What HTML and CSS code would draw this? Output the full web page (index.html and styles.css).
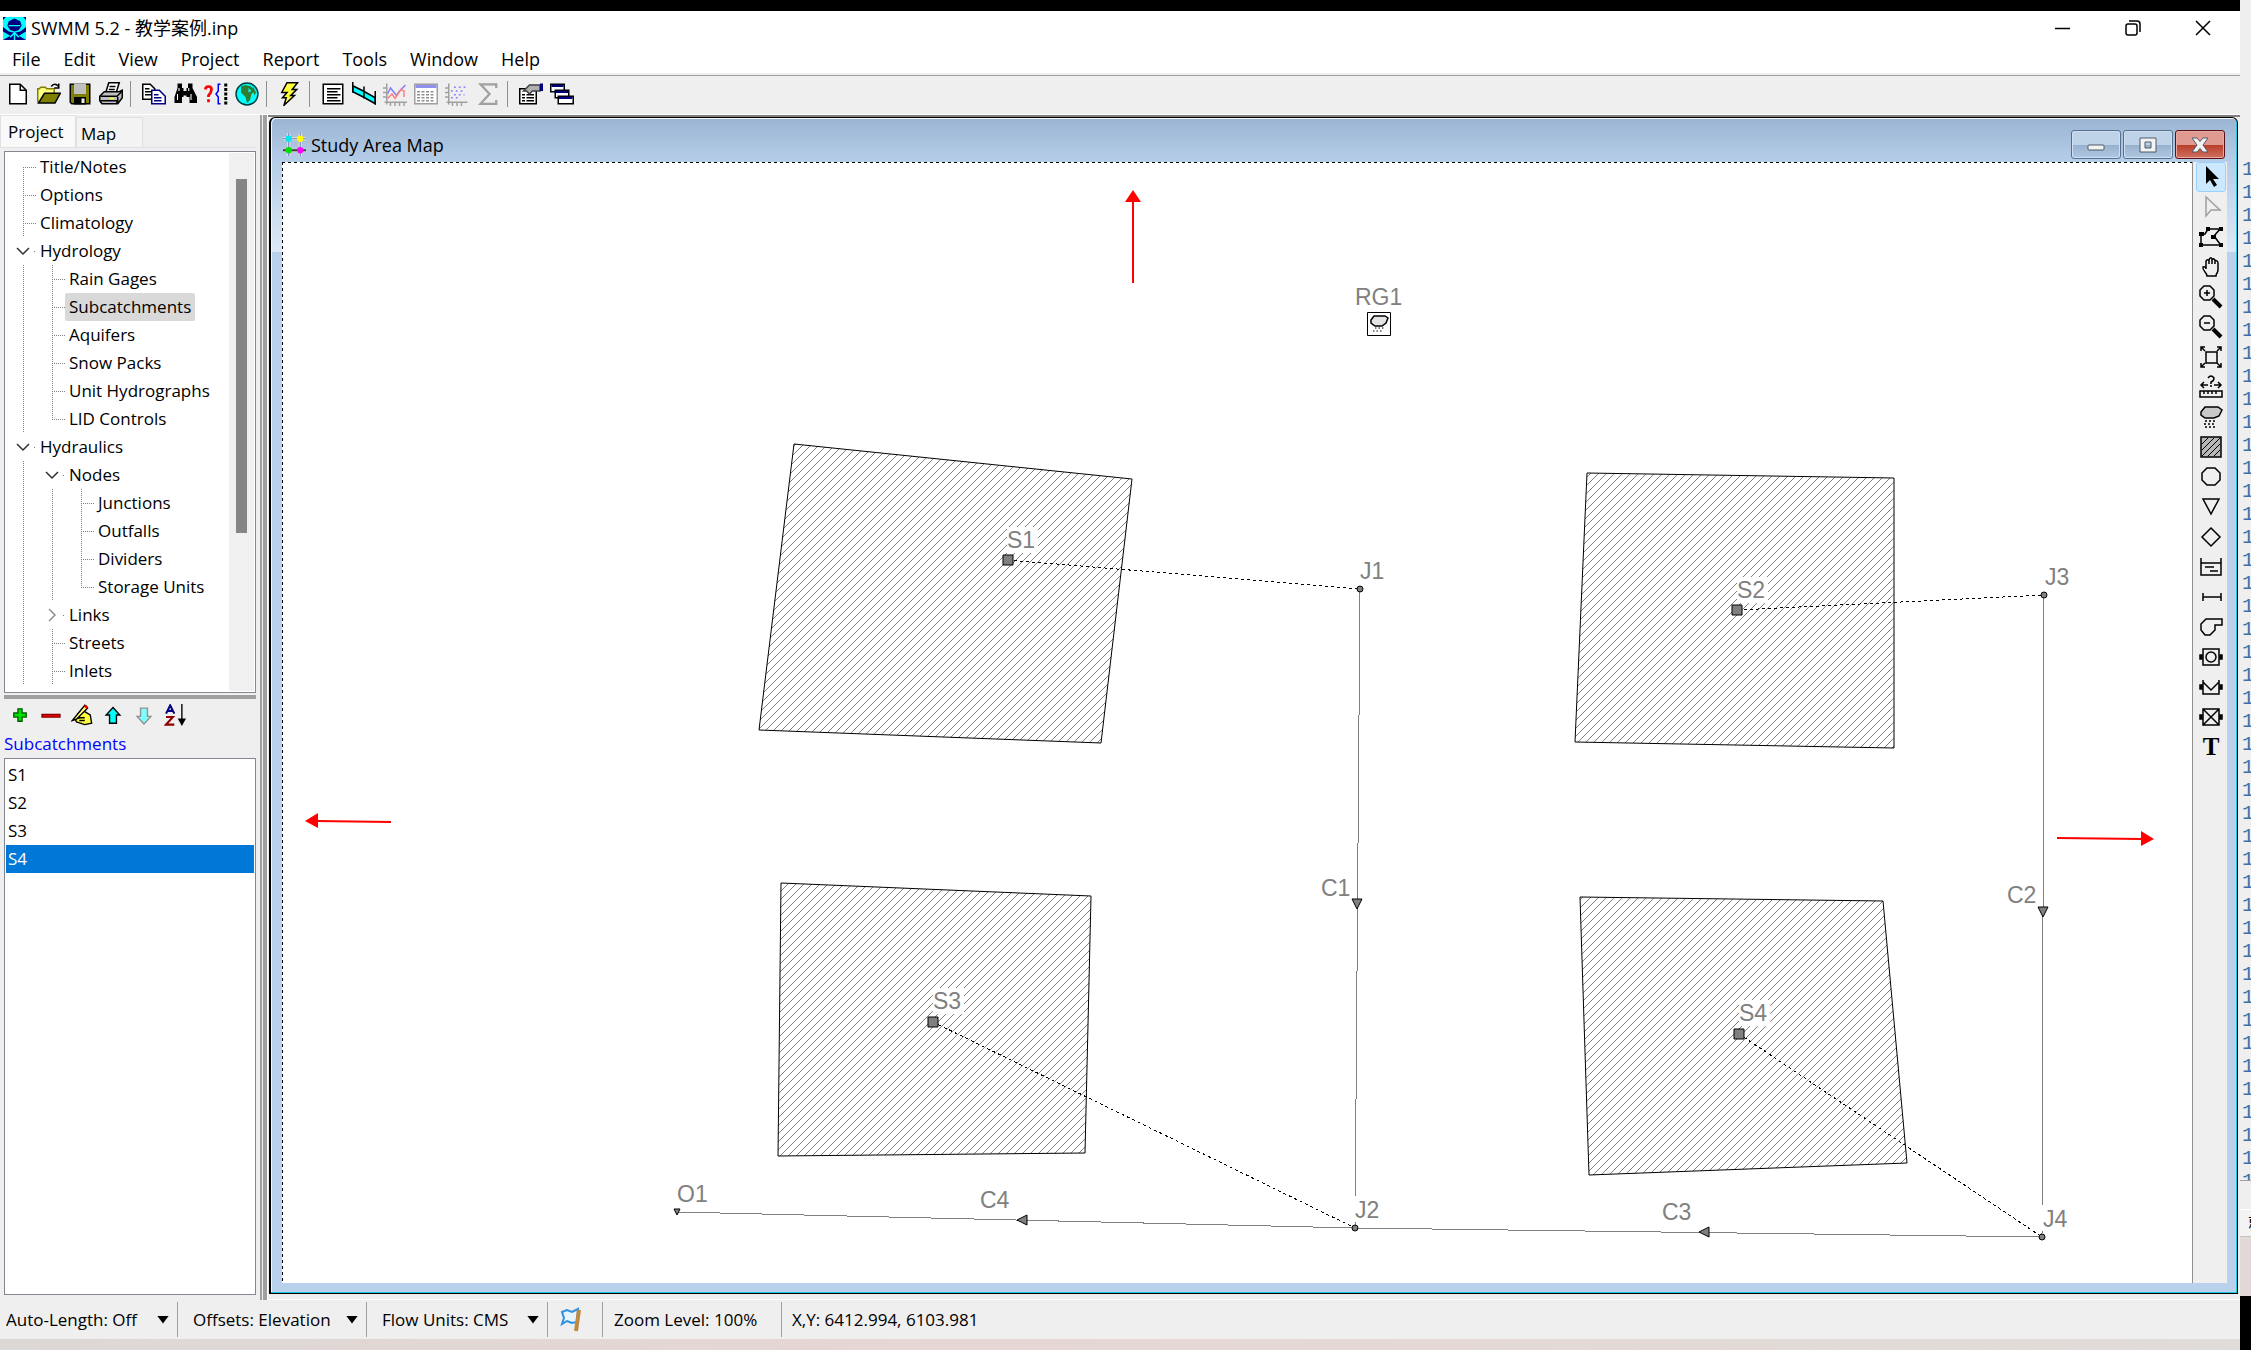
FILE: index.html
```html
<!DOCTYPE html>
<html lang="en">
<head>
<meta charset="utf-8">
<title>SWMM 5.2 - 教学案例.inp</title>
<link rel="stylesheet" href="styles.css">
</head>
<body>
<div class="app">
  <div class="screen-edge"></div>
  <header class="titlebar">
    <svg class="logo" viewBox="0 0 16 16"><path fill="#00ffff" d="M0 0h16v16H0z"/><path fill="#000080" d="M8 1l4 2 1 3-2 3-3 1-3-1-2-3 1-3zM0 7l4 3 4 1 4-1 4-3v3l-5 3 5 3H0l5-3-5-3zM0 0h2L0 2zM14 0h2v2z"/><path stroke="#00ffff" fill="none" d="M4 6h8M8 11v5M5 14l3-3 3 3"/></svg>
    <h1>SWMM 5.2 - 教学案例.inp</h1>
    <div class="win-buttons">
      <button aria-label="Minimize"><svg viewBox="0 0 16 16"><path d="M0 8.500h15"/></svg></button>
      <button aria-label="Restore"><svg viewBox="0 0 16 16"><rect x="1" y="4" width="11" height="11" rx="2"/><path d="M4 1h8q3 0 3 3v8"/></svg></button>
      <button aria-label="Close"><svg viewBox="0 0 16 16"><path d="M1 1l14 14M15 1L1 15"/></svg></button>
    </div>
  </header>
  <nav class="menubar">
    <button>File</button><button>Edit</button><button>View</button><button>Project</button><button>Report</button><button>Tools</button><button>Window</button><button>Help</button>
  </nav>
  <div class="toolbar">
    <button aria-label="New"><svg viewBox="0 0 16 16"><path d="M2.500 1.500h7l4 4v9h-11z" fill="#fff" stroke="#000"/><path d="M9.500 1.500v4h4" fill="none" stroke="#000"/></svg></button>
    <button aria-label="Open"><svg viewBox="0 0 16 16"><path d="M.5 13.500v-9h1l1-1h3l1 1h5v3" fill="#ffff80" stroke="#808000"/><path d="M1 14l4-6.500h10.500L12 14z" fill="#808000" stroke="#000"/><path d="M9.500 3q2-3 5 0M14.500 1v3h-3" fill="none" stroke="#000"/></svg></button>
    <button aria-label="Save"><svg viewBox="0 0 16 16"><path d="M1.500 1.500h13v13h-12l-1-1z" fill="#808000" stroke="#000"/><path d="M4 1h8v7H4z" fill="#c0c0c0"/><path d="M4 10h8v5H4z"/><path fill="#efefef" d="M9 11h2v3H9z"/></svg></button>
    <button aria-label="Print"><svg viewBox="0 0 16 16"><path d="M4.500 7l2-6.500h7L11.500 7" fill="#fff" stroke="#000"/><path d="M7 3h4M6.500 5h4" stroke="#000"/><path d="M.5 9.500l3-3h10l2-1v5l-3 4H2l-1.500-2z" fill="#c0c0c0" stroke="#000"/><path d="M1 9.500h11l3-3M1 12.500h11v2M12.500 10v4" stroke="#000" fill="none"/><path d="M7 11h3" stroke="#ff0"/></svg></button>
    <span class="sep"></span>
    <button aria-label="Copy"><svg viewBox="0 0 16 16"><path d="M.5 1.500h5l3 3v7h-8z" fill="#fff" stroke="#000"/><path d="M2 4.500h3M2 6.500h4M2 8.500h4" stroke="#000"/><path d="M6.500 5.500h5l4 4v5h-9z" fill="#fff" stroke="#000080"/><path d="M8 8.500h3M8 10.500h5M8 12.500h5" stroke="#000080"/></svg></button>
    <button aria-label="Find"><svg viewBox="0 0 16 16"><path d="M3 1h3v3h1v2h2V4h1V1h3v3l3 6v4h-5v-4H9V9H7v1H6v4H1v-4l2-6z"/><path d="M4 4v2M3 8v4M10.500 4v2M12 8v4" stroke="#fff" stroke-width=".7"/></svg></button>
    <button aria-label="Query"><svg viewBox="0 0 16 16"><path d="M1 5q0-2 2-2t2 2-2 4v1M3 11.500v2" fill="none" stroke="#f00" stroke-width="1.800"/><path d="M11 1.500H9.500V6L8 8l1.500 2v4.500H11" fill="none" stroke="#00f"/><path d="M14.500 1v14" stroke="#000" stroke-width="2" stroke-dasharray="2 1"/></svg></button>
    <button aria-label="Overview"><svg viewBox="0 0 16 16"><circle cx="8" cy="8" r="7.300" fill="#00ffff" stroke="#004040"/><path d="M4 3l3-1 4 1 2 3-2 2-1 4-2 2-1-4-3-3z" fill="#2e7d32"/><path d="M12 3l2 4-1 2-1-3z" fill="#2e7d32"/><path d="M9 4l2 2-2 1z" fill="#00ffff"/></svg></button>
    <span class="sep"></span>
    <button aria-label="Run"><svg viewBox="0 0 16 16"><path d="M6 .5h7L9.500 5h3L8.500 9h2.500L4 15.500 5.500 10.500H3L6 7H2.500z" fill="#ffff40" stroke="#000"/></svg></button>
    <span class="sep"></span>
    <button aria-label="Report"><svg viewBox="0 0 16 16"><path d="M1.500 1.500h13v13h-13z" fill="#fff" stroke="#000"/><path d="M4 4.500h9M4 6.500h7M4 8.500h9M4 10.500h7M4 12.500h9" stroke="#000"/></svg></button>
    <button aria-label="Profile plot"><svg viewBox="0 0 16 16"><path d="M.5 2.500l7 3.500 8 4.500v4L7.500 10l-7-3.500z" fill="#00ffff" stroke="#000"/><path d="M.5 0v7M8 3v8M15.500 6v9" stroke="#000"/></svg></button>
    <button aria-label="Time series plot"><svg viewBox="0 0 16 16"><path d="M2.500 1v14M1 13.500h15M0 4h3M0 7h3M0 10h3M5 13v3M8 13v3M11 13v3M14 13v3" stroke="#a0a0a0"/><path d="M3 8l2-4 4 5 2-3 4-4" fill="none" stroke="#8080ff"/><path d="M3 11l3-3 2 3 4-6 2 1v4" fill="none" stroke="#ff8080"/></svg></button>
    <button aria-label="Table"><svg viewBox="0 0 16 16"><path d="M.5 1.500h15v13H.5z" fill="#fff" stroke="#a0a0a0"/><path d="M1 3h14" stroke="#9090f0" stroke-width="2"/><path d="M2 6.500h12M2 8.500h12M2 10.500h12M2 12.500h12" stroke="#909090" stroke-dasharray="2 1"/></svg></button>
    <button aria-label="Scatter plot"><svg viewBox="0 0 16 16"><path d="M2.500 1v14M1 13.500h14M0 4h3M0 7h3M0 10h3M5 13v3M8 13v3M11 13v3" stroke="#a0a0a0"/><path d="M6 3.500h8M4 6h9M6 8.500h7M4 10.500h6" stroke="#8080ff" stroke-dasharray="1.200 2"/></svg></button>
    <button aria-label="Statistics"><svg viewBox="0 0 16 16"><path d="M13.500 4V1.500H3L9 8l-6 6.500h10.500V12" fill="none" stroke="#a0a0a0" stroke-width="1.500"/></svg></button>
    <span class="sep"></span>
    <button aria-label="Options"><svg viewBox="0 0 16 16"><path d="M.5 4.500h11v10H.5z" fill="#fff" stroke="#000"/><path d="M2 8.500h2M5 8.500h5M2 10.500h2M5 10.500h5M2 12.500h2M5 12.500h5" stroke="#000"/><path d="M3 6l4-4h7v4H9L7 8 5 6z" fill="#b0b0b0" stroke="#404040"/><path d="M14 1h2v5h-2z" fill="#000080"/></svg></button>
    <button aria-label="Arrange windows"><svg viewBox="0 0 16 16"><g fill="#fff" stroke="#000"><path d="M.5 1.500h9v5h-9zM3.500 5.500h9v5h-9zM5.500 9.500h10v5h-10z"/></g><path d="M1 2.500h8M4 6.500h8M6 10.500h9" stroke="#000080" stroke-width="1.500"/></svg></button>
  </div>

  <main class="work">
    <aside class="side">
      <div class="tabs" role="tablist"><button class="tab active" role="tab">Project</button><button class="tab" role="tab">Map</button></div>
      <div class="tree">
        <ul>
          <li><i class="first tee"></i><button>Title/Notes</button></li>
          <li><i class="line tee"></i><button>Options</button></li>
          <li><i class="line tee"></i><button>Climatology</button></li>
          <li><i class="node"><svg viewBox="0 0 14 14"><path d="M1 4l6 6 6-6"/></svg></i><button>Hydrology</button></li>
          <li><i class="line"></i><i class="line tee"></i><button>Rain Gages</button></li>
          <li><i class="line"></i><i class="line tee"></i><button class="selected">Subcatchments</button></li>
          <li><i class="line"></i><i class="line tee"></i><button>Aquifers</button></li>
          <li><i class="line"></i><i class="line tee"></i><button>Snow Packs</button></li>
          <li><i class="line"></i><i class="line tee"></i><button>Unit Hydrographs</button></li>
          <li><i class="line"></i><i class="last tee"></i><button>LID Controls</button></li>
          <li><i class="node"><svg viewBox="0 0 14 14"><path d="M1 4l6 6 6-6"/></svg></i><button>Hydraulics</button></li>
          <li><i class="line"></i><i class="node"><svg viewBox="0 0 14 14"><path d="M1 4l6 6 6-6"/></svg></i><button>Nodes</button></li>
          <li><i class="line"></i><i class="line"></i><i class="line tee"></i><button>Junctions</button></li>
          <li><i class="line"></i><i class="line"></i><i class="line tee"></i><button>Outfalls</button></li>
          <li><i class="line"></i><i class="line"></i><i class="line tee"></i><button>Dividers</button></li>
          <li><i class="line"></i><i class="line"></i><i class="last tee"></i><button>Storage Units</button></li>
          <li><i class="line"></i><i class="node closed"><svg viewBox="0 0 14 14"><path d="M4 1l6 6-6 6"/></svg></i><button>Links</button></li>
          <li><i class="line"></i><i class="line tee"></i><button>Streets</button></li>
          <li><i class="line"></i><i class="line tee"></i><button>Inlets</button></li>
        </ul>
        <div class="scroll"><div class="thumb"></div></div>
      </div>
      <div class="hsplit"></div>
      <div class="list-tools">
        <button aria-label="Add"><svg viewBox="0 0 16 16"><path d="M6.500 3.500h3v3h3v3h-3v3h-3v-3h-3v-3h3z" fill="#00e000" stroke="#006000"/></svg></button>
        <button aria-label="Delete"><svg viewBox="0 0 16 16"><path d="M1.500 7.500h13v2h-13z" fill="#f00000" stroke="#800000"/></svg></button>
        <button aria-label="Edit"><svg viewBox="0 0 16 16"><path d="M5 7l4-2 5 3 1 6-5 1-6-2-1-2 3-1z" fill="#ffff40" stroke="#000"/><path d="M1 12L10 1l2 2-8 8z" fill="#ffff80" stroke="#000"/><path d="M10 1l2 2" stroke="#e00000" stroke-width="2"/><path d="M5 10h5M6 12h4" stroke="#000"/></svg></button>
        <button aria-label="Move up"><svg viewBox="0 0 16 16"><path d="M8 2.500l5 5.500h-2.500v6h-5V8H3z" fill="#00ffff" stroke="#000"/></svg></button>
        <button aria-label="Move down"><svg viewBox="0 0 16 16"><path d="M8 14.500L3 9h2.500V3h5v6H13z" fill="#80ffff" stroke="#909090"/></svg></button>
        <button aria-label="Sort"><svg viewBox="0 0 16 16"><path d="M1.500 7L4.500 1l3 6M2.500 5h4" fill="none" stroke="#000080" stroke-width="1.500"/><path d="M1.500 9.500h5l-5 5.500h6" fill="none" stroke="#900000" stroke-width="1.500"/><path d="M13 0v13" stroke="#000"/><path d="M10 10.500h6L13 16z"/></svg></button>
      </div>
      <h2>Subcatchments</h2>
      <ul class="objects">
        <li><button>S1</button></li><li><button>S2</button></li><li><button>S3</button></li><li><button class="selected">S4</button></li>
      </ul>
    </aside>
    <div class="vsplit"></div>

    <section class="mdi">
      <div class="window">
        <header class="window-title">
          <svg class="map-icon" viewBox="0 0 22 22"><path d="M0 5.500h22M0 16.500h22M5.500 0v22M16.500 0v22" stroke="#f0e8c8" stroke-width="3"/><path d="M0 5.500h22M5.500 0v22M16.500 0v22" stroke="#7070d0"/><path d="M0 16.500h22" stroke="#404040" stroke-width="2"/><circle cx="5.500" cy="5.500" r="3" fill="#00e8f0"/><circle cx="16.500" cy="5.500" r="3" fill="#ff0"/><circle cx="5.500" cy="16.500" r="3" fill="#00e000"/><circle cx="16.500" cy="16.500" r="3" fill="#f0f"/></svg>
          <h2>Study Area Map</h2>
          <button aria-label="Minimize map"><svg viewBox="0 0 20 16"><rect x="2" y="8" width="16" height="5" rx="1"/></svg></button>
          <button aria-label="Maximize map"><svg viewBox="0 0 20 16"><path fill-rule="evenodd" d="M2 1h16v14H2zM7 5v6h6V5z"/></svg></button>
          <button class="close" aria-label="Close map"><svg viewBox="0 0 20 16"><path d="M2 1h5l3 3.500L13 1h5l-5 7 5 7h-5l-3-3.500L7 15H2l5-7z"/></svg></button>
        </header>
        <div class="window-body">
          <div class="map">
            <svg class="canvas" role="img" aria-label="Study area">
              <defs>
                <pattern id="hatch" width="8" height="8" patternUnits="userSpaceOnUse"><path d="M-1 9L9-1" stroke="#808080" shape-rendering="crispEdges"/></pattern>
              </defs>
              <g transform="translate(-282 -162)">
                <g class="basin">
                  <path d="M794 444L1132 479 1101 743 759 730z"/>
                  <path d="M1587 473L1894 478V748L1575 742z"/>
                  <path d="M781 883L1091 896 1085 1153 778 1156z"/>
                  <path d="M1580 897L1883 901 1907 1163 1589 1175z"/>
                </g>
                <g class="conduit">
                  <path d="M1360 589L1355 1228M2044 595L2042 1237M2042 1237L1355 1228M1355 1228L677 1212"/>
                </g>
                <g class="label-bg">
                  <path d="M1007 527h31v26h-31zM1737 577h31v26h-31zM933 988h31v26h-31zM1739 1000h31v26h-31zM1353 1196h28v26h-28zM2040 1205h28v26h-28z"/>
                </g>
                <g class="outlet">
                  <path d="M1008 560L1360 589M1738 610L2044 595M933 1022L1355 1228M1739 1034L2042 1237"/>
                </g>
                <g class="marker">
                  <path d="M1003 555h10v10h-10zM1732 605h10v10h-10zM928 1017h10v10h-10zM1734 1029h10v10h-10z"/>
                  <circle cx="1360" cy="589" r="3"/><circle cx="2044" cy="595" r="3"/><circle cx="1355" cy="1228" r="3"/><circle cx="2042" cy="1237" r="3"/>
                  <path d="M674 1209h6l-3 6zM1352 899h10l-5 10zM2038 907h10l-5 10zM1017 1220l10-5v10zM1699 1232l10-5v10z"/>
                </g>
                <g class="gage">
                  <path d="M1367.500 312.500h23v23h-23z" fill="#fff" stroke="#000"/>
                  <path d="M1371 320l3-4h11l3 2-2 5-4 3h-7l-4-3z" fill="#e4e4e4" stroke="#000" stroke-width="1.500"/>
                  <path d="M1375 328h10M1373 331h9" stroke="#000" stroke-dasharray="1.500 2"/>
                </g>
                <g class="extent">
                  <path d="M1133 283V200M391 822L317 821M2057 838L2142 839"/>
                  <path class="tip" d="M1125 202h16l-8-12zM318 813v15l-13-7zM2141 831v15l13-7z"/>
                </g>
                <g class="labels">
                  <text x="1355" y="305">RG1</text><text x="1007" y="548">S1</text><text x="1737" y="598">S2</text><text x="933" y="1009">S3</text><text x="1739" y="1021">S4</text>
                  <text x="1360" y="579">J1</text><text x="1355" y="1218">J2</text><text x="2045" y="585">J3</text><text x="2043" y="1227">J4</text>
                  <text x="1321" y="896">C1</text><text x="2007" y="903">C2</text><text x="1662" y="1220">C3</text><text x="980" y="1208">C4</text><text x="677" y="1202">O1</text>
                </g>
              </g>
            </svg>
          </div>
          <div class="map-tools">
            <button class="on" aria-label="Select object"><svg viewBox="0 0 24 24"><path d="M7 1v18l4-4 4 7 3-2-4-6h6z" fill="#000" stroke="none"/></svg></button>
            <button aria-label="Select vertex"><svg viewBox="0 0 24 24"><path d="M7 2v19l5-6h9z" stroke="#a0a0a0"/></svg></button>
            <button aria-label="Select region"><svg viewBox="0 0 24 24"><path d="M2 9h4l3-5h12M2 9v11h19M21 4l-6 7 6 8" /><path fill="#000" stroke="none" d="M0 7h5v4H0zM7 2h4v4H7zM20 2h4v4h-4zM12 10h5v4h-5zM0 18h4v4H0zM20 18h4v4h-4z"/></svg></button>
            <button aria-label="Pan"><svg viewBox="0 0 24 24"><path d="M8 21c0-4-5-5-4-9 2-1 3 1 3 2V6c1-2 3-1 3 0 0-4 3-4 3-1 1-2 3-1 3 1 1-1 3 0 3 2v7c0 3-2 3-2 6zM10 6v3M13 5v4M16 6v3"/></svg></button>
            <button aria-label="Zoom in"><svg viewBox="0 0 24 24"><path d="M5 1h6l4 4v6l-4 4H5l-4-4V5zM8 5v6M5 8h6"/><path d="M14 14l8 8" stroke-width="4"/></svg></button>
            <button aria-label="Zoom out"><svg viewBox="0 0 24 24"><path d="M5 1h6l4 4v6l-4 4H5l-4-4V5zM5 8h6"/><path d="M14 14l8 8" stroke-width="4"/></svg></button>
            <button aria-label="Full extent"><svg viewBox="0 0 24 24"><path d="M7 7h11v11H7zM2 6V2h4M2 2l4 4M18 2h4v4M22 2l-4 4M2 18v4h4M2 22l4-4M22 18v4h-4M22 22l-4-4"/></svg></button>
            <button aria-label="Measure"><svg viewBox="0 0 24 24"><path d="M9 3q3-4 6 0 0 3-3 4v2M12 10v2M2 10h7M15 10h7M5 7l-3 3 3 3M19 7l3 3-3 3M1 16h22v6H1zM5 16v3M9 16v3M13 16v3M17 16v3"/></svg></button>
            <button aria-label="Rain gage"><svg viewBox="0 0 24 24"><path d="M2 7l4-5h13l4 3-3 6-5 2H6L2 10z" fill="#c8c8c8"/><path d="M6 16h11M5 19h11M6 22h10" stroke-dasharray="2 2"/></svg></button>
            <button aria-label="Subcatchment"><svg viewBox="0 0 24 24"><path d="M2 2h20v20H2z" fill="#b8b8b8"/><path stroke-width="1" d="M3 9l6-6M3 15L15 3M3 21L21 3M9 21L21 9M15 21l6-6"/></svg></button>
            <button aria-label="Junction"><svg viewBox="0 0 24 24"><path d="M8 3h8l5 5v7l-5 5H8l-5-5V8z"/></svg></button>
            <button aria-label="Outfall"><svg viewBox="0 0 24 24"><path d="M4 4h16l-8 15z"/></svg></button>
            <button aria-label="Divider"><svg viewBox="0 0 24 24"><path d="M12 3l9 9-9 9-9-9z"/></svg></button>
            <button aria-label="Storage unit"><svg viewBox="0 0 24 24"><path d="M2 3v17h20V3M2 8h20M6 12h9M11 16h8"/></svg></button>
            <button aria-label="Conduit"><svg viewBox="0 0 24 24"><path d="M4 8v8M22 8v8M4 12h18"/></svg></button>
            <button aria-label="Pump"><svg viewBox="0 0 24 24"><path d="M7 4h16v6h-7v5l-5 5H6l-4-5V9z"/></svg></button>
            <button aria-label="Orifice"><svg viewBox="0 0 24 24"><path d="M4 4h16v16H4z"/><circle cx="12" cy="12" r="5"/><path fill="#000" d="M1 10h2v4H1zM21 10h2v4h-2z"/></svg></button>
            <button aria-label="Weir"><svg viewBox="0 0 24 24"><path d="M4 5v14h16V5M4 7l8 8 8-8"/><path fill="#000" d="M1 10h2v4H1zM21 10h2v4h-2z"/></svg></button>
            <button aria-label="Outlet"><svg viewBox="0 0 24 24"><path d="M4 4h16v16H4zM4 4l16 16M20 4L4 20"/><path fill="#000" d="M1 10h2v4H1zM21 10h2v4h-2z"/></svg></button>
            <button class="text-tool" aria-label="Label">T</button>
          </div>
        </div>
      </div>
    </section>
  </main>

  <footer class="status">
    <label class="drop"><select aria-label="Auto-Length"><option>Auto-Length: Off</option></select></label>
    <label class="drop offsets"><select aria-label="Offsets"><option>Offsets: Elevation</option></select></label>
    <label class="drop units"><select aria-label="Flow Units"><option>Flow Units: CMS</option></select></label>
    <span class="flag"><svg viewBox="0 0 24 26"><path d="M3 5l5-2 5 2 6-3-1 13-5 1-5-2-5 3 2-6z" fill="#e8f4ff" stroke="#3090e0" stroke-width="2"/><path d="M20 3l-3 21" stroke="#c08840" stroke-width="4"/></svg></span>
    <span class="zoom">Zoom Level: 100%</span>
    <span class="coords">X,Y: 6412.994, 6103.981</span>
  </footer>
  <div class="desktop"></div>
</div>
<div class="behind">
  <div class="numbers">1<br>1<br>1<br>1<br>1<br>1<br>1<br>1<br>1<br>1<br>1<br>1<br>1<br>1<br>1<br>1<br>1<br>1<br>1<br>1<br>1<br>1<br>1<br>1<br>1<br>1<br>1<br>1<br>1<br>1<br>1<br>1<br>1<br>1<br>1<br>1<br>1<br>1<br>1<br>1<br>1<br>1<br>1<br>1<br>1</div>
  <div class="gap"></div>
  <div class="caption">就</div>
  <div class="wallpaper"></div>
  <div class="dark"></div>
</div>
</body>
</html>
```
FILE: styles.css
```css
* { box-sizing: border-box; }
body {
  margin: 0;
  height: 100vh;
  overflow: hidden;
  display: grid;
  grid-template-columns: 1fr 11px;
  background: #efefef;
  color: #000;
  font: 17px/28px "Open Sans", "Noto Sans CJK SC", sans-serif;
}
h1, h2 { margin: 0; font-size: inherit; font-weight: 400; white-space: nowrap; }
ul { list-style: none; margin: 0; padding: 0; }
button, select {
  font: inherit;
  color: inherit;
  background: none;
  border: 0;
  padding: 0;
  margin: 0;
  white-space: nowrap;
}
svg { display: block; flex: none; }

.app { display: flex; flex-direction: column; min-width: 0; height: 100vh; }
.screen-edge { height: 11px; background: #000; }

.titlebar { display: flex; align-items: center; height: 34px; padding-left: 3px; background: #fff; }
.logo { width: 23px; height: 23px; margin-right: 5px; }
.titlebar h1 { font-size: 18px; }
.win-buttons { margin-left: auto; padding-right: 2px; display: flex; }
.win-buttons button { width: 70px; display: flex; justify-content: center; }
.win-buttons svg { width: 16px; height: 16px; fill: none; stroke: #000; stroke-width: 1.5; }

.menubar { display: flex; gap: 23px; height: 28px; padding-left: 12px; background: #fff; font-size: 18px; }

.toolbar {
  display: flex;
  align-items: center;
  height: 42px;
  padding-left: 2px;
  background: linear-gradient(#efefef 2px, #a0a0a0 2px 3px, #efefef 3px 41px, #fff 41px);
}
.toolbar button { width: 31px; display: flex; justify-content: center; }
.toolbar svg { width: 24px; height: 24px; }
.sep { width: 12px; height: 26px; background: linear-gradient(90deg, transparent 4px, #909090 4px 5px, transparent 5px); }

.work { flex: 1; min-height: 0; display: flex; }
.side { width: 260px; padding: 0 4px 5px 4px; display: flex; flex-direction: column; }
.tabs { display: flex; align-items: flex-end; height: 33px; margin-left: -4px; border-bottom: 1px solid #e0e0e0; }
.tab { height: 30px; width: 67px; padding: 2px 4px 0; text-align: left; background: #f3f3f3; border: 1px solid #e0e0e0; border-bottom: 0; }
.tab.active { height: 32px; width: 76px; padding: 0 7px; background: #f9f9f9; }

.tree { display: flex; height: 542px; margin-top: 3px; border: 1px solid #828790; background: #fff; }
.tree ul { flex: 1; padding: 1px 0 0 2px; overflow: hidden; }
.tree li { display: flex; height: 28px; }
.tree li button { padding: 0 4px; border-radius: 2px; }
.tree li button.selected { background: #d9d9d9; }
.tree i { --v: repeating-linear-gradient(#808080 0 1px, transparent 1px 2px); --h: repeating-linear-gradient(90deg, #808080 0 1px, transparent 1px 2px); width: 29px; }
.line { background: var(--v) 16px 0 / 1px 100% no-repeat; }
.tee { background: var(--v) 16px 0 / 1px 100% no-repeat, var(--h) 16px 14px / 14px 1px no-repeat; }
.tee.first { background: var(--v) 16px 14px / 1px 14px no-repeat, var(--h) 16px 14px / 14px 1px no-repeat; }
.tee.last { background: var(--v) 16px 0 / 1px 14px no-repeat, var(--h) 16px 14px / 14px 1px no-repeat; }
.node { display: flex; align-items: center; padding-left: 9px; background: var(--h) 27px 14px / 3px 1px no-repeat; }
.node svg { width: 14px; height: 14px; fill: none; stroke: #303030; stroke-width: 1.5; }
.node.closed svg { stroke: #909090; }
.scroll { width: 25px; margin: 1px; padding: 26px 7px 0; background: #f0f0f0; }
.thumb { height: 354px; background: #858585; }

.hsplit { height: 6px; border-top: 2px solid #efefef; background: #a0a0a0; }
.list-tools { display: flex; align-items: center; height: 31px; }
.list-tools button { width: 31px; display: flex; justify-content: center; }
.list-tools svg { width: 22px; height: 22px; }
.side h2 { color: #00f; }
.objects { flex: 1; padding: 2px 1px; background: #fff; border: 1px solid #828790; }
.objects button { display: block; width: 100%; padding-left: 2px; text-align: left; }
.objects .selected { background: #0078d7; color: #fff; }

.vsplit { width: 8px; background: linear-gradient(90deg, #a0a0a0 2px, #efefef 2px 3px, #a0a0a0 3px 7px, #fff 7px); }
.mdi { flex: 1; min-width: 0; padding: 2px 2px 5px 1px; border-bottom: 1px solid #fff; background: linear-gradient(#808080 2px, #efefef 2px); }
.window {
  height: 100%;
  display: flex;
  flex-direction: column;
  padding: 0 10px 10px 11px;
  border: solid #000;
  border-width: 1px 1px 1px 2px;
  border-radius: 6px 6px 0 0;
  box-shadow: inset -1px -1px #20c8e0, inset 1px 1px #f0f6fc;
  background: linear-gradient(#9ab4d2, #b6cee8 44px, #dce8f5 134px, #b9d1ea 134px) #b9d1ea;
}
.window-title { display: flex; align-items: center; gap: 2px; height: 44px; padding: 12px 2px 3px 0; }
.map-icon { width: 23px; height: 23px; margin: 0 3px 0 1px; }
.window-title h2 { flex: 1; font-size: 18px; }
.window-title button {
  width: 50px;
  height: 29px;
  display: flex;
  align-items: center;
  justify-content: center;
  border: 1px solid #55708f;
  border-radius: 3px;
  box-shadow: inset 0 0 0 1px #d0e0f0;
  background: linear-gradient(#bed2e8 50%, #96b0cc 50%, #b0c8e2);
}
.window-title button.close { border-color: #5a1018; box-shadow: inset 0 0 0 1px #e8a8a0; background: linear-gradient(#e09a90 50%, #b83c28 50%, #d07060); }
.window-title svg:not(.map-icon) { width: 20px; height: 16px; fill: #f4f4f4; stroke: #505868; }
.window-body { flex: 1; min-height: 0; display: flex; background: #fff; }
.map { flex: 1; min-width: 0; position: relative; overflow: hidden; background:
  repeating-linear-gradient(90deg, #000 0 3px, transparent 3px 6px) 0 0 / 100% 1px no-repeat,
  repeating-linear-gradient(#000 0 3px, transparent 3px 6px) 0 0 / 1px 100% no-repeat; }
.canvas { width: 100%; height: 100%; position: absolute; inset: 0; }
.basin { fill: url(#hatch); stroke: #000; }
.conduit { stroke: #808080; fill: none; shape-rendering: crispEdges; }
.outlet { stroke: #000; stroke-dasharray: 3 3; fill: none; shape-rendering: crispEdges; }
.label-bg { fill: #fff; }
.marker { fill: #808080; stroke: #000; }
.extent { stroke: #f00; stroke-width: 2; }
.extent .tip { fill: #f00; stroke: none; }
.labels { font: 23px "Liberation Sans", sans-serif; fill: #808080; }

.map-tools { width: 35px; padding-left: 3px; border-left: 1px solid #909090; background: #efefef; }
.map-tools button { display: flex; align-items: center; justify-content: center; width: 30px; height: 30px; border: 1px solid transparent; border-radius: 3px; }
.map-tools button.on { background: #cce8ff; border-color: #99d1ff; }
.map-tools svg { width: 24px; height: 24px; fill: none; stroke: #000; stroke-width: 1.5; }
.map-tools .text-tool { font: bold 25px/28px "Liberation Serif", serif; }

.status { display: flex; align-items: center; height: 39px; background: #efefef; }
.status > * { height: 35px; display: flex; align-items: center; border-right: 1px solid #a0a0a0; white-space: nowrap; }
.status select { appearance: none; flex: 1; line-height: 28px; }
.drop { width: 178px; padding: 0 8px 0 6px; }
.drop.offsets { width: 189px; padding-left: 15px; }
.drop.units { width: 181px; padding-left: 15px; }
.drop::after { content: ""; width: 12px; height: 8px; background: #000; clip-path: polygon(0 0, 100% 0, 50% 100%); }
.status .flag { width: 55px; padding-left: 11px; }
.flag svg { width: 24px; height: 26px; }
.status .zoom { width: 179px; padding-left: 11px; }
.status .coords { padding-left: 10px; border: 0; }
.desktop { height: 11px; background: linear-gradient(90deg, #dcd8d6, #e6d6d4 40%, #e0dcd9); }

.behind { display: flex; flex-direction: column; overflow: hidden; height: 100vh; }
.numbers { height: 1181px; padding: 158px 0 0 2px; border-bottom: 1px solid #a0a0a0; overflow: hidden; color: #4070a8; font: 20px/23px "Liberation Mono", monospace; }
.gap { height: 29px; border-bottom: 1px solid #fff; }
.caption { height: 27px; padding-left: 8px; background: #f3f3f3; border-bottom: 1px solid #c8c0c0; line-height: 26px; }
.wallpaper { height: 59px; background: #e2d8d7; }
.dark { flex: 1; background: #000; }
```
